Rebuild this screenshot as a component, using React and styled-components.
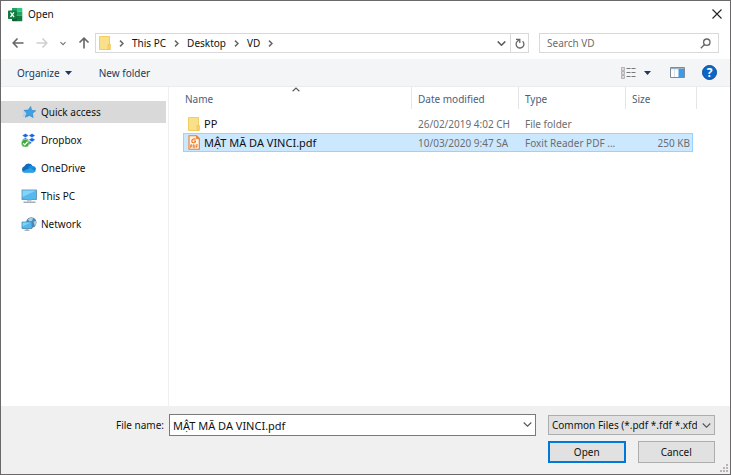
import React, { useState } from 'react';
import styled, { createGlobalStyle } from 'styled-components';

const GlobalStyle = createGlobalStyle`
    * {
        box-sizing: border-box;
    }
    body {
        margin: 0;
        background: #ffffff;
        color: #111111;
        font-family: 'Noto Sans', 'Open Sans', sans-serif;
        font-size: 10px;
        line-height: 16px;
    }
    button, input, select {
        font: inherit;
        color: inherit;
        margin: 0;
    }
    svg {
        display: block;
        flex: none;
    }
`;

const Dialog = styled.main`
    display: flex;
    flex-direction: column;
    min-height: 100vh;
    border: 1px solid #6b6869;
`;

const TitleBar = styled.header`
    display: flex;
    align-items: center;
    gap: 5px;
    height: 26px;
    padding: 0 8px 0 7px;
`;

const Title = styled.h1`
    flex: 1;
    margin: 0;
    font-size: inherit;
    font-weight: 400;
`;

const IconButton = styled.button`
    display: flex;
    align-items: center;
    justify-content: center;
    padding: 0;
    border: 0;
    background: none;
`;

const NavBar = styled.nav`
    display: flex;
    align-items: center;
    height: 32px;
    padding: 0 11px;
`;

const History = styled.div`
    display: flex;
    align-items: center;
    gap: 12px;
    width: 83px;
`;

const AddressBar = styled.div`
    display: flex;
    align-items: stretch;
    flex: 1;
    height: 20px;
    border: 1px solid #d9d9d9;
    padding-left: 3px;
`;

const Crumbs = styled.ol`
    display: flex;
    align-items: center;
    flex: 1;
    gap: 8px;
    margin: 0;
    padding: 0;
    list-style: none;
`;

const Crumb = styled.li`
    display: flex;
    align-items: center;
    gap: 8px;
    & a {
        color: inherit;
        text-decoration: none;
    }
`;

const AddressButton = styled(IconButton)`
    width: 18px;
    border-left: ${props => props.$divided ? '1px solid #d9d9d9' : '0'};
`;

const SearchBox = styled.label`
    display: flex;
    align-items: center;
    width: 180px;
    height: 20px;
    margin-left: 10px;
    padding: 0 7px;
    border: 1px solid #d9d9d9;
    & input {
        flex: 1;
        min-width: 0;
        padding: 0;
        border: 0;
        outline: 0;
        background: none;
    }
    & input::placeholder {
        color: #6d6d6d;
        opacity: 1;
    }
`;

const Toolbar = styled.div`
    display: flex;
    align-items: center;
    height: 28px;
    padding: 0 13px 0 16px;
    background: #f4f5f7;
    border-bottom: 1px solid #ebecee;
    color: #1e395b;
`;

const ToolButton = styled(IconButton)`
    gap: 5px;
    margin-right: ${props => props.$gap || 0}px;
`;

const Spacer = styled.div`
    flex: 1;
`;

const Body = styled.div`
    display: flex;
    flex: 1;
`;

const Sidebar = styled.nav`
    width: 168px;
    padding: 14px 2px 0 0;
    border-right: 1px solid #f0f0f0;
`;

const Places = styled.ul`
    display: flex;
    flex-direction: column;
    gap: 6px;
    margin: 0;
    padding: 0;
    list-style: none;
`;

const Place = styled.a`
    display: flex;
    align-items: center;
    gap: 4px;
    height: 22px;
    padding-left: 20px;
    background: ${props => props.$active ? '#d9d9d9' : 'none'};
    color: inherit;
    text-decoration: none;
`;

const FilePane = styled.section`
    flex: 1;
    min-width: 0;
    padding-left: 14px;
`;

const FileTable = styled.table`
    table-layout: fixed;
    width: 514px;
    border-collapse: separate;
    border-spacing: 0;
`;

const HeadCell = styled.th`
    position: relative;
    height: 22px;
    padding: 1px 6px 0 ${props => props.$first ? 2 : 6}px;
    border-right: 1px solid #e5e5e5;
    color: #4c607a;
    font-weight: 400;
    text-align: left;
    & svg {
        position: absolute;
        top: 0;
        left: 48%;
    }
`;

const GapRow = styled.tr`
    height: 5px;
`;

const FileRow = styled.tr`
    color: #6d6d6d;
    & td {
        height: 19px;
        padding: 0 4px 0 6px;
        border: 0 solid ${props => props.$selected ? '#99d1ff' : 'transparent'};
        border-width: 1px 0;
        background: ${props => props.$selected ? '#cce8ff' : 'none'};
        line-height: 16px;
        white-space: nowrap;
        overflow: hidden;
        text-overflow: ellipsis;
    }
    & td:first-child {
        padding-left: 4px;
        border-left-width: 1px;
        color: #111111;
        font-size: 11px;
    }
    & td:last-child {
        padding-right: 2px;
        border-right-width: 1px;
        text-align: right;
    }
`;

const FileName = styled.span`
    display: flex;
    align-items: center;
    gap: 4px;
`;

const Footer = styled.footer`
    display: grid;
    grid-template-columns: 163px 1fr 167px;
    align-items: center;
    row-gap: 5px;
    padding: 8px 15px 11px 0;
    background: #f0f0f0;
    position: relative;
`;

const FieldLabel = styled.label`
    text-align: right;
`;

const ComboField = styled.div`
    position: relative;
    margin: 0 12px 0 5px;
    & input {
        display: block;
        width: 100%;
        height: 22px;
        padding: 0 20px 0 3px;
        border: 1px solid #7a7a7a;
        border-radius: 0;
        outline: 0;
        background: #ffffff;
        font-size: 11px;
    }
`;

const SelectField = styled.div`
    position: relative;
    & select {
        display: block;
        width: 100%;
        height: 20px;
        padding: 0 17px 0 3px;
        border: 1px solid #adadad;
        border-radius: 0;
        background: #e1e1e1;
        appearance: none;
    }
`;

const DropMark = styled.span`
    position: absolute;
    top: 8px;
    right: 4px;
    pointer-events: none;
`;

const Actions = styled.div`
    grid-column: 3;
    display: grid;
    grid-template-columns: 1fr 1fr;
    gap: 12px;
`;

const ActionButton = styled.button`
    height: 22px;
    padding: 0;
    border: ${props => props.$primary ? '2px solid #0078d7' : '1px solid #adadad'};
    background: #e1e1e1;
`;

const Grip = styled.div`
    position: absolute;
    right: 2px;
    bottom: 2px;
`;

const Chevron = ({ color = '#5c5c5c', size = 9, stroke = 1.2, up }) => (
    <svg width={size} height={5} viewBox="0 0 9 5" fill="none" stroke={color} strokeWidth={stroke}>
        <path d={up ? 'M.7 4.500 4.500.8 8.300 4.500' : 'M.7.500 4.500 4.200 8.300.500'} />
    </svg>
);

const CrumbArrow = () => (
    <svg width="5" height="7" viewBox="0 0 5 7" fill="none" stroke="#666" strokeWidth="1.5">
        <path d="M1 .6 4 3.5 1 6.4" />
    </svg>
);

const Triangle = () => (
    <svg width="7" height="4" viewBox="0 0 7 4" fill="#1e395b">
        <path d="M0 0h7L3.500 4z" />
    </svg>
);

const Arrow = ({ color, turn = 0 }) => (
    <svg width="12" height="12" viewBox="0 0 12 12" fill="none" stroke={color} strokeWidth="1.6">
        <path d="M11.500 6H1.200M5.500 1.500 1.200 6l4.300 4.500" transform={`rotate(${turn} 6 6)`} />
    </svg>
);

const ExcelIcon = () => (
    <svg width="15" height="15" viewBox="0 0 15 15">
        <path d="M4 1h5v6.500H4z" fill="#21a366" />
        <path d="M9 1h4.500a.8.8 0 0 1 .8.8V4.500H9z" fill="#33c481" />
        <path d="M4 4.500h5v4H4z" fill="#107c41" />
        <path d="M9 4.500h5.300v4H9z" fill="#21a366" />
        <path d="M4 8.500h5v5.700H4.800a.8.8 0 0 1-.8-.8z" fill="#185c37" />
        <path d="M9 8.500h5.300v4.900a.8.8 0 0 1-.8.8H9z" fill="#107c41" />
        <rect x="0" y="3.500" width="8.500" height="8.500" rx=".7" fill="#107c41" />
        <path d="M2.500 5.400 6 10M6 5.400 2.500 10" stroke="#fff" strokeWidth="1.300" />
    </svg>
);

const FolderIcon = () => (
    <svg width="12" height="14" viewBox="0 0 12 14">
        <path d="M.5.500h10v13H.5z" fill="#fbe08c" stroke="#f1cd62" />
        <path d="M9 8.500h2.500v5H9z" fill="#f6d36b" stroke="#e9c154" strokeWidth=".6" />
    </svg>
);

const PdfIcon = () => (
    <svg width="12" height="15" viewBox="0 0 12 15" fill="none" stroke="#ee7a22">
        <path d="M1 .700h7.500L11.300 3.500v10.800H1z" fill="#fff5ea" strokeWidth="1.100" />
        <path d="M8.300.700v3h3" fill="#ee7a22" strokeWidth=".6" />
        <path d="M7.700 4.200C5.500 3.300 3.800 4.500 3.800 6.200c0 1.800 2.700 2 3.600.8V6H5.700" strokeWidth="1.200" />
        <path d="M2.700 13V9.800h1.200v1.600H2.700M5.300 9.800v3h.9l.6-.8v-1.400l-.6-.8zM8.200 13V9.800h1.700M8.200 11.400h1.300" strokeWidth=".9" />
    </svg>
);

const StarIcon = () => (
    <svg width="16" height="16" viewBox="0 0 16 16">
        <path d="M9.700 2.500 10.500 6.300 14.700 6.800 11.500 9.300 12.100 13.500 8.500 11.400 4.300 13.200 5.700 9.300 3 6.300 7.200 6.100z" fill="#3da1e6" stroke="#2782c4" strokeWidth=".6" />
        <path d="M2.200 10.200h3M1.500 12h3M2.500 7.900h1.800" stroke="#8cc8f0" strokeWidth=".7" />
    </svg>
);

const DropboxIcon = () => (
    <svg width="16" height="16" viewBox="0 0 16 16">
        <path d="M4.400 1.500 7.700 3.600 4.400 5.700 1.100 3.600zM11 1.500l3.300 2.100L11 5.700 7.700 3.600zM4.400 5.700l3.300 2.100-3.300 2.100-3.300-2.100zM11 5.700l3.300 2.100L11 9.900 7.700 7.800zM7.700 8.700l3.300 2.100-3.300 2.100-3.300-2.100z" fill="#1763e8" stroke="#fff" strokeWidth=".4" />
        <circle cx="4.300" cy="11.200" r="3.900" fill="#3aaa35" stroke="#d8eed6" strokeWidth=".6" />
        <path d="m2.200 11.200 1.600 1.700 2.800-3.200" fill="none" stroke="#fff" strokeWidth="1.300" />
    </svg>
);

const OneDriveIcon = () => (
    <svg width="16" height="16" viewBox="0 0 16 16">
        <path d="M3.500 12.500A3.200 3.200 0 0 1 3.300 6.300 4.700 4.700 0 0 1 11.800 6.300 3.200 3.200 0 0 1 12.500 12.500z" fill="#0f6cbd" />
        <path d="M7 7.200a4 4 0 0 1 4.800-.9 3.200 3.200 0 0 1 3.200 3.200z" fill="#1490df" />
        <path d="M1.200 11.500 9.500 7.800l5.300 3.200a3 3 0 0 1-2.500 1.500h-8.800c-1 0-1.800-.4-2.300-1z" fill="#28a0ea" />
    </svg>
);

const PcIcon = () => (
    <svg width="16" height="16" viewBox="0 0 16 16">
        <rect x="1" y="2" width="14.500" height="9.500" fill="#54b9ee" stroke="#5c86a3" strokeWidth=".8" />
        <path d="M1.500 2.500h13.500L1.500 9z" fill="#86d3f8" />
        <path d="M6 11.800h4.500v1.400H6z" fill="#b9c6cf" />
        <path d="M2.500 14.200h12" stroke="#8b9aa5" strokeWidth="1.200" />
    </svg>
);

const NetworkIcon = () => (
    <svg width="16" height="16" viewBox="0 0 16 16">
        <circle cx="10.300" cy="6.500" r="5.200" fill="#4d87ad" />
        <path d="M7 3.500c1.500-2 4-2 5-1.300L11 5 8.500 5.800zM12.500 5.500l2.500-.5c.6 2-.1 4-1.300 5z" fill="#a9cfe3" />
        <path d="M1 6h10v6.500H1z" fill="#4fb8ee" stroke="#4683a7" strokeWidth=".8" />
        <path d="M1.500 6.500H10L1.500 10.500z" fill="#7fd0f8" />
        <path d="M3.500 14.200h5M6 12.700v1.500" stroke="#8296a3" />
    </svg>
);

const RefreshIcon = () => (
    <svg width="10" height="11" viewBox="0 0 10 11" fill="none" stroke="#666" strokeWidth="1.300">
        <path d="M7.600 3.200A3.900 3.900 0 1 1 2.200 3.400L4.500 1.500" />
        <path d="M1 1.400h3.800V5" />
    </svg>
);

const SearchIcon = () => (
    <svg width="11" height="11" viewBox="0 0 11 11" fill="none" stroke="#666" strokeWidth="1.300">
        <circle cx="6.800" cy="4.200" r="3.200" />
        <path d="M4.600 6.500.8 10.300" />
    </svg>
);

const CloseIcon = () => (
    <svg width="10" height="10" viewBox="0 0 10 10" stroke="#222" strokeWidth="1.100">
        <path d="m.5.500 9 9M9.500.500l-9 9" />
    </svg>
);

const ViewIcon = () => (
    <svg width="15" height="12" viewBox="0 0 15 12" fill="none">
        <path d="M.5.500h3v3h-3zM.5 4.500h3v3h-3zM.5 8.500h3v3h-3z" stroke="#999" strokeWidth=".7" />
        <path d="M1.500 2h1M1.500 10h1" stroke="#d07060" />
        <path d="M1.500 6h1" stroke="#5f92c4" />
        <path d="M5.500 1.500h4M10.500 1.500h4M5.500 5.500h4M10.500 5.500h4M5.500 9.500h4M10.500 9.500h4" stroke="#777" />
    </svg>
);

const PaneIcon = () => (
    <svg width="15" height="11" viewBox="0 0 15 11">
        <path d="M.5.500h14v10H.5z" fill="#fff" stroke="#7d8b98" />
        <path d="M1 1h13v1.200H1z" fill="#9db2c4" />
        <path d="M8.500 2h5.500v8H8.500z" fill="#3b9be8" />
        <path d="M4.500 2v8" stroke="#c2ccd5" strokeWidth=".6" />
    </svg>
);

const HelpMark = styled.span`
    display: flex;
    align-items: center;
    justify-content: center;
    width: 15px;
    height: 15px;
    border: 1px solid #0a4f9e;
    border-radius: 50%;
    background: #0a66c8;
    color: #ffffff;
    font-size: 12px;
    font-weight: 700;
    line-height: 12px;
`;

const GripIcon = () => (
    <svg width="8" height="8" viewBox="0 0 8 8" fill="#b5b5b5">
        <path d="M6 0h2v2H6zM3 3h2v2H3zM6 3h2v2H6zM0 6h2v2H0zM3 6h2v2H3zM6 6h2v2H6z" />
    </svg>
);

const places = [
    { name: 'Quick access', Icon: StarIcon },
    { name: 'Dropbox', Icon: DropboxIcon },
    { name: 'OneDrive', Icon: OneDriveIcon },
    { name: 'This PC', Icon: PcIcon },
    { name: 'Network', Icon: NetworkIcon },
];

const files = [
    { name: 'PP', date: '26/02/2019 4:02 CH', type: 'File folder', size: '', Icon: FolderIcon },
    { name: 'MẬT MÃ DA VINCI.pdf', date: '10/03/2020 9:47 SA', type: 'Foxit Reader PDF ...', size: '250 KB', Icon: PdfIcon },
];

const crumbs = ['This PC', 'Desktop', 'VD'];

export default function App() {
    const [active, setActive] = useState('Quick access');
    const [fileName, setFileName] = useState('MẬT MÃ DA VINCI.pdf');

    return (
        <>
            <GlobalStyle />
            <Dialog>
                <TitleBar>
                    <ExcelIcon />
                    <Title>Open</Title>
                    <IconButton aria-label="Close"><CloseIcon /></IconButton>
                </TitleBar>
                <NavBar>
                    <History>
                        <IconButton aria-label="Back"><Arrow color="#666" /></IconButton>
                        <IconButton aria-label="Forward"><Arrow color="#cfcfcf" turn={180} /></IconButton>
                        <IconButton aria-label="Recent locations"><Chevron color="#777" size={6} stroke={1.8} /></IconButton>
                        <IconButton aria-label="Up"><Arrow color="#666" turn={90} /></IconButton>
                    </History>
                    <AddressBar>
                        <Crumbs>
                            <li><FolderIcon /></li>
                            <li><CrumbArrow /></li>
                            { crumbs.map(crumb => <Crumb key={crumb}>
                                <a href="#">{crumb}</a>
                                <CrumbArrow />
                            </Crumb>) }
                        </Crumbs>
                        <AddressButton aria-label="Previous locations"><Chevron stroke={1.6} /></AddressButton>
                        <AddressButton $divided aria-label="Refresh"><RefreshIcon /></AddressButton>
                    </AddressBar>
                    <SearchBox>
                        <input aria-label="Search VD" placeholder="Search VD" />
                        <SearchIcon />
                    </SearchBox>
                </NavBar>
                <Toolbar>
                    <ToolButton $gap={27}>Organize <Triangle /></ToolButton>
                    <ToolButton>New folder</ToolButton>
                    <Spacer />
                    <ToolButton $gap={8} aria-label="Change your view"><ViewIcon /></ToolButton>
                    <ToolButton $gap={19} aria-label="More options"><Triangle /></ToolButton>
                    <ToolButton $gap={17} aria-label="Preview pane"><PaneIcon /></ToolButton>
                    <ToolButton aria-label="Help"><HelpMark>?</HelpMark></ToolButton>
                </Toolbar>
                <Body>
                    <Sidebar>
                        <Places>
                            { places.map(({ name, Icon }) => <li key={name}>
                                <Place href="#" $active={name === active} onClick={() => setActive(name)}>
                                    <Icon />
                                    {name}
                                </Place>
                            </li>) }
                        </Places>
                    </Sidebar>
                    <FilePane>
                        <FileTable>
                            <colgroup>
                                <col width="229" />
                                <col width="107" />
                                <col width="107" />
                                <col width="67" />
                                <col width="4" />
                            </colgroup>
                            <thead>
                                <tr>
                                    <HeadCell $first>Name<Chevron size={8} stroke={1.3} up /></HeadCell>
                                    <HeadCell>Date modified</HeadCell>
                                    <HeadCell>Type</HeadCell>
                                    <HeadCell colSpan={2}>Size</HeadCell>
                                </tr>
                            </thead>
                            <tbody>
                                <GapRow />
                                { files.map(({ name, date, type, size, Icon }) => <FileRow
                                    key={name}
                                    $selected={name === fileName}
                                    onClick={() => setFileName(name)}
                                >
                                    <td><FileName><Icon />{name}</FileName></td>
                                    <td>{date}</td>
                                    <td>{type}</td>
                                    <td>{size}</td>
                                </FileRow>) }
                            </tbody>
                        </FileTable>
                    </FilePane>
                </Body>
                <Footer>
                    <FieldLabel htmlFor="file-name">File name:</FieldLabel>
                    <ComboField>
                        <input id="file-name" value={fileName} onChange={e => setFileName(e.target.value)} />
                        <DropMark><Chevron /></DropMark>
                    </ComboField>
                    <SelectField>
                        <select aria-label="File type">
                            <option>Common Files (*.pdf *.fdf *.xfdf)</option>
                        </select>
                        <DropMark><Chevron /></DropMark>
                    </SelectField>
                    <Actions>
                        <ActionButton $primary>Open</ActionButton>
                        <ActionButton>Cancel</ActionButton>
                    </Actions>
                    <Grip><GripIcon /></Grip>
                </Footer>
            </Dialog>
        </>
    );
}
